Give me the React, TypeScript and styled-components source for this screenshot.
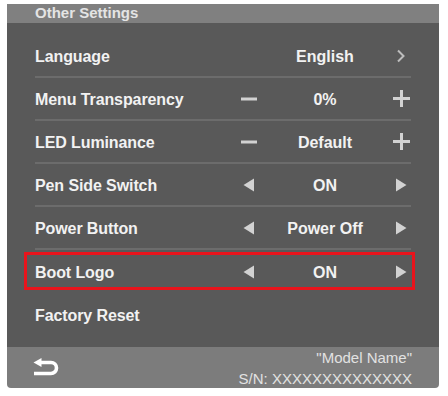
import React from "react";
import styled, { createGlobalStyle } from "styled-components";

const Global = createGlobalStyle`
  html, body { margin: 0; padding: 0; background: #ffffff; }
  body { font-family: "Liberation Sans", Arial, sans-serif; }
`;

const Panel = styled.div`
  margin: 4px 0 0 7px;
  width: 432px;
  display: flex;
  flex-direction: column;
  border-radius: 0 0 4px 4px;
  overflow: hidden;
`;

const Header = styled.div`
  height: 19px;
  background: #808080;
  color: #e4e4e4;
  font-weight: bold;
  font-size: 15px;
  line-height: 17px;
  padding-left: 28px;
  overflow: hidden;
`;

const Body = styled.div`
  background: #595959;
  padding: 12px 28px 11px 28px;
  display: flex;
  flex-direction: column;
`;

const Row = styled.div<{ $sep?: boolean; $highlight?: boolean }>`
  position: relative;
  height: ${(p) => (p.$sep ? 41 : 43)}px;
  display: grid;
  grid-template-columns: 1fr 20px 132px 20px;
  align-items: center;
  padding-left: 0;
  border-bottom: ${(p) => (p.$sep ? "2px solid #6c6c6c" : "none")};
  &::after {
    content: "";
    display: ${(p) => (p.$highlight ? "block" : "none")};
    position: absolute;
    top: 2px;
    bottom: 3px;
    left: -11px;
    right: -4px;
    border: 3px solid #e8141c;
  }
`;

const Label = styled.span`
  color: #f2f2f2;
  font-weight: bold;
  font-size: 16px;
  letter-spacing: -0.1px;
  padding-top: 2px;
`;

const Value = styled.span`
  color: #f2f2f2;
  font-weight: bold;
  font-size: 16px;
  text-align: center;
  padding-top: 2px;
`;

const IconCell = styled.span`
  display: flex;
  align-items: center;
  justify-content: center;
  color: #d2d2d2;
`;

const Footer = styled.div`
  height: 41px;
  background: #7c7c7c;
  display: flex;
  align-items: center;
  justify-content: space-between;
  padding: 0 27px 0 26px;
`;

const FooterText = styled.div`
  color: #e2e2e2;
  font-size: 15px;
  line-height: 21px;
  text-align: right;
  margin-top: 1px;
`;

const Minus = () => (
  <svg width="16" height="16" viewBox="0 0 16 16">
    <rect x="0" y="6.5" width="16" height="3" fill="currentColor" />
  </svg>
);

const Plus = () => (
  <svg width="17" height="17" viewBox="0 0 17 17">
    <rect x="0" y="7" width="17" height="3" fill="currentColor" />
    <rect x="7" y="0" width="3" height="17" fill="currentColor" />
  </svg>
);

const Left = () => (
  <svg width="12" height="14" viewBox="0 0 12 14">
    <polygon points="11,0.5 11,13.5 0.5,7" fill="currentColor" />
  </svg>
);

const Right = () => (
  <svg width="12" height="14" viewBox="0 0 12 14">
    <polygon points="1,0.5 1,13.5 11.5,7" fill="currentColor" />
  </svg>
);

const Chevron = () => (
  <svg width="10" height="14" viewBox="0 0 10 14">
    <polyline points="2,1.5 7.5,7 2,12.5" fill="none" stroke="#bdbdbd" strokeWidth="2" />
  </svg>
);

const BackIcon = () => (
  <svg width="26" height="20" viewBox="0 0 26 20">
    <path d="M7 4.5 H18 A5.5 5.5 0 0 1 18 15.5 H1" fill="none" stroke="#ffffff" strokeWidth="3.6" />
    <polygon points="0.5,4.5 8.5,0 8.5,9" fill="#ffffff" />
  </svg>
);

type Kind = "chevron" | "plusminus" | "arrows" | "none";

interface Item {
  label: string;
  value?: string;
  kind: Kind;
  sep: boolean;
  highlight?: boolean;
}

const items: Item[] = [
  { label: "Language", value: "English", kind: "chevron", sep: true },
  { label: "Menu Transparency", value: "0%", kind: "plusminus", sep: true },
  { label: "LED Luminance", value: "Default", kind: "plusminus", sep: true },
  { label: "Pen Side Switch", value: "ON", kind: "arrows", sep: true },
  { label: "Power Button", value: "Power Off", kind: "arrows", sep: true },
  { label: "Boot Logo", value: "ON", kind: "arrows", sep: false, highlight: true },
  { label: "Factory Reset", kind: "none", sep: false },
];

const leftIcon = (k: Kind) => (k === "plusminus" ? <Minus /> : k === "arrows" ? <Left /> : null);
const rightIcon = (k: Kind) =>
  k === "plusminus" ? <Plus /> : k === "arrows" ? <Right /> : k === "chevron" ? <Chevron /> : null;

export default function App() {
  return (
    <>
      <Global />
      <Panel>
        <Header>Other Settings</Header>
        <Body>
          {items.map((it) => (
            <Row key={it.label} $sep={it.sep} $highlight={it.highlight}>
              <Label>{it.label}</Label>
              <IconCell>{leftIcon(it.kind)}</IconCell>
              <Value>{it.value ?? ""}</Value>
              <IconCell>{rightIcon(it.kind)}</IconCell>
            </Row>
          ))}
        </Body>
        <Footer>
          <BackIcon />
          <FooterText>
            "Model Name"
            <br />
            S/N: XXXXXXXXXXXXXX
          </FooterText>
        </Footer>
      </Panel>
    </>
  );
}
